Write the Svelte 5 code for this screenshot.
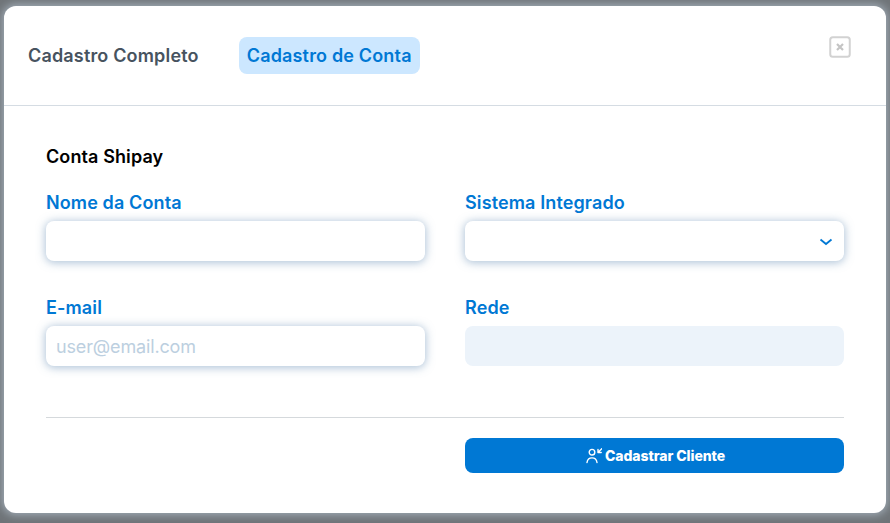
<script>
  let tab = $state("conta");
</script>

<div class="backdrop">
  <div class="modal">
    <header class="modal-head">
      <nav class="tabs">
        <button class="tab" class:active={tab === "completo"} onclick={() => (tab = "completo")}>Cadastro Completo</button>
        <button class="tab" class:active={tab === "conta"} onclick={() => (tab = "conta")}>Cadastro de Conta</button>
      </nav>
      <button class="close" aria-label="Fechar">
        <svg width="22" height="22" viewBox="0 0 22 22" fill="none">
          <rect x="1.25" y="1.25" width="19.5" height="19.5" rx="2.5" stroke="#d2d2d2" stroke-width="2" />
          <path d="M8 8l6 6M14 8l-6 6" stroke="#c4c4c4" stroke-width="2.2" />
        </svg>
      </button>
    </header>

    <section class="modal-body">
      <h2>Conta Shipay</h2>
      <div class="grid">
        <div class="field">
          <label for="nome">Nome da Conta</label>
          <input id="nome" type="text" />
        </div>
        <div class="field">
          <label for="sistema">Sistema Integrado</label>
          <div class="select-wrap">
            <select id="sistema"><option></option></select>
            <svg class="chevron" width="14" height="8" viewBox="0 0 14 8" fill="none">
              <path d="M1.500 1.500L7 6l5.500-4.500" stroke="#0078d4" stroke-width="1.800" />
            </svg>
          </div>
        </div>
        <div class="field">
          <label for="email">E-mail</label>
          <input id="email" type="text" placeholder="user@email.com" />
        </div>
        <div class="field">
          <label for="rede">Rede</label>
          <input id="rede" type="text" disabled />
        </div>
      </div>

      <hr />

      <div class="actions">
        <span></span>
        <button class="submit">
          <svg width="16" height="18" viewBox="0 0 16 18" fill="none" stroke="#fff" stroke-width="1.400" stroke-linecap="round">
            <circle cx="6" cy="5.200" r="2.800" />
            <path d="M1 15.500c.4-3 2.400-4.600 5-4.600s4.600 1.600 5 4.600" />
            <path d="M15.800 1.700l-3.800 3.800M12 2.400v3.100h3.200" stroke-linejoin="round" />
          </svg>
          Cadastrar Cliente
        </button>
      </div>
    </section>
  </div>
</div>

<style>
  :global(body) {
    margin: 0;
    font-family: Inter, "Liberation Sans", sans-serif;
  }

  .backdrop {
    width: 890px;
    height: 523px;
    box-sizing: border-box;
    padding: 6px 4px 10px;
    background: #6f7478;
    overflow: hidden;
  }

  .modal {
    height: 507px;
    background: #fff;
    border-radius: 12px;
    box-shadow: 0 0 8px 2px rgba(195, 210, 225, 0.6);
    display: flex;
    flex-direction: column;
  }

  .modal-head {
    height: 100px;
    flex: none;
    box-sizing: border-box;
    border-bottom: 1px solid #d5dce3;
    display: flex;
    justify-content: space-between;
    align-items: flex-start;
    padding: 31px 35px 0 16px;
  }

  .tabs {
    display: flex;
    gap: 32px;
  }

  .tab {
    height: 37px;
    padding: 0 8px;
    border: none;
    border-radius: 8px;
    background: transparent;
    font: 600 18px Inter, sans-serif;
    letter-spacing: 0.17px;
    color: #47535f;
    margin: 0;
  }

  .tab.active {
    background: #cce7ff;
    color: #0078d4;
  }

  .close {
    border: none;
    background: none;
    padding: 0;
    margin-top: -1px;
    height: 22px;
    display: flex;
  }

  .modal-body {
    padding: 0 42px;
  }

  h2 {
    margin: 41px 0 0;
    font: 600 18px/20px Inter, sans-serif;
    letter-spacing: 0.1px;
    color: #000;
  }

  .grid {
    display: grid;
    grid-template-columns: 379px 379px;
    column-gap: 40px;
    row-gap: 36px;
    margin-top: 25px;
  }

  .field {
    display: flex;
    flex-direction: column;
    gap: 8px;
  }

  label {
    font: 600 18px/21px Inter, sans-serif;
    letter-spacing: 0.12px;
    color: #0078d4;
  }

  input,
  select {
    width: 100%;
    height: 40px;
    box-sizing: border-box;
    border: none;
    outline: none;
    border-radius: 8px;
    background: #fff;
    padding: 0 10px;
    font: 400 18px Inter, sans-serif;
    color: #47535f;
    box-shadow: 0 1px 8px 1px rgba(100, 140, 180, 0.5);
  }

  select {
    appearance: none;
    display: block;
  }

  input::placeholder {
    color: #bccfe0;
    opacity: 1;
    letter-spacing: -0.15px;
  }

  input:disabled {
    background: #ecf3fa;
    box-shadow: none;
  }

  .select-wrap {
    position: relative;
  }

  .chevron {
    position: absolute;
    right: 11px;
    top: 17px;
  }

  hr {
    border: none;
    border-top: 1px solid #d5d9dc;
    margin: 51px 0 20px;
  }

  .actions {
    display: grid;
    grid-template-columns: 379px 379px;
    column-gap: 40px;
  }

  .submit {
    height: 35px;
    border: none;
    border-radius: 8px;
    background: #0078d4;
    color: #fff;
    font: 800 14px Inter, sans-serif;
    letter-spacing: -0.06px;
    display: flex;
    align-items: center;
    justify-content: center;
    gap: 3px;
    padding: 0 0 0 2px;
  }
</style>
